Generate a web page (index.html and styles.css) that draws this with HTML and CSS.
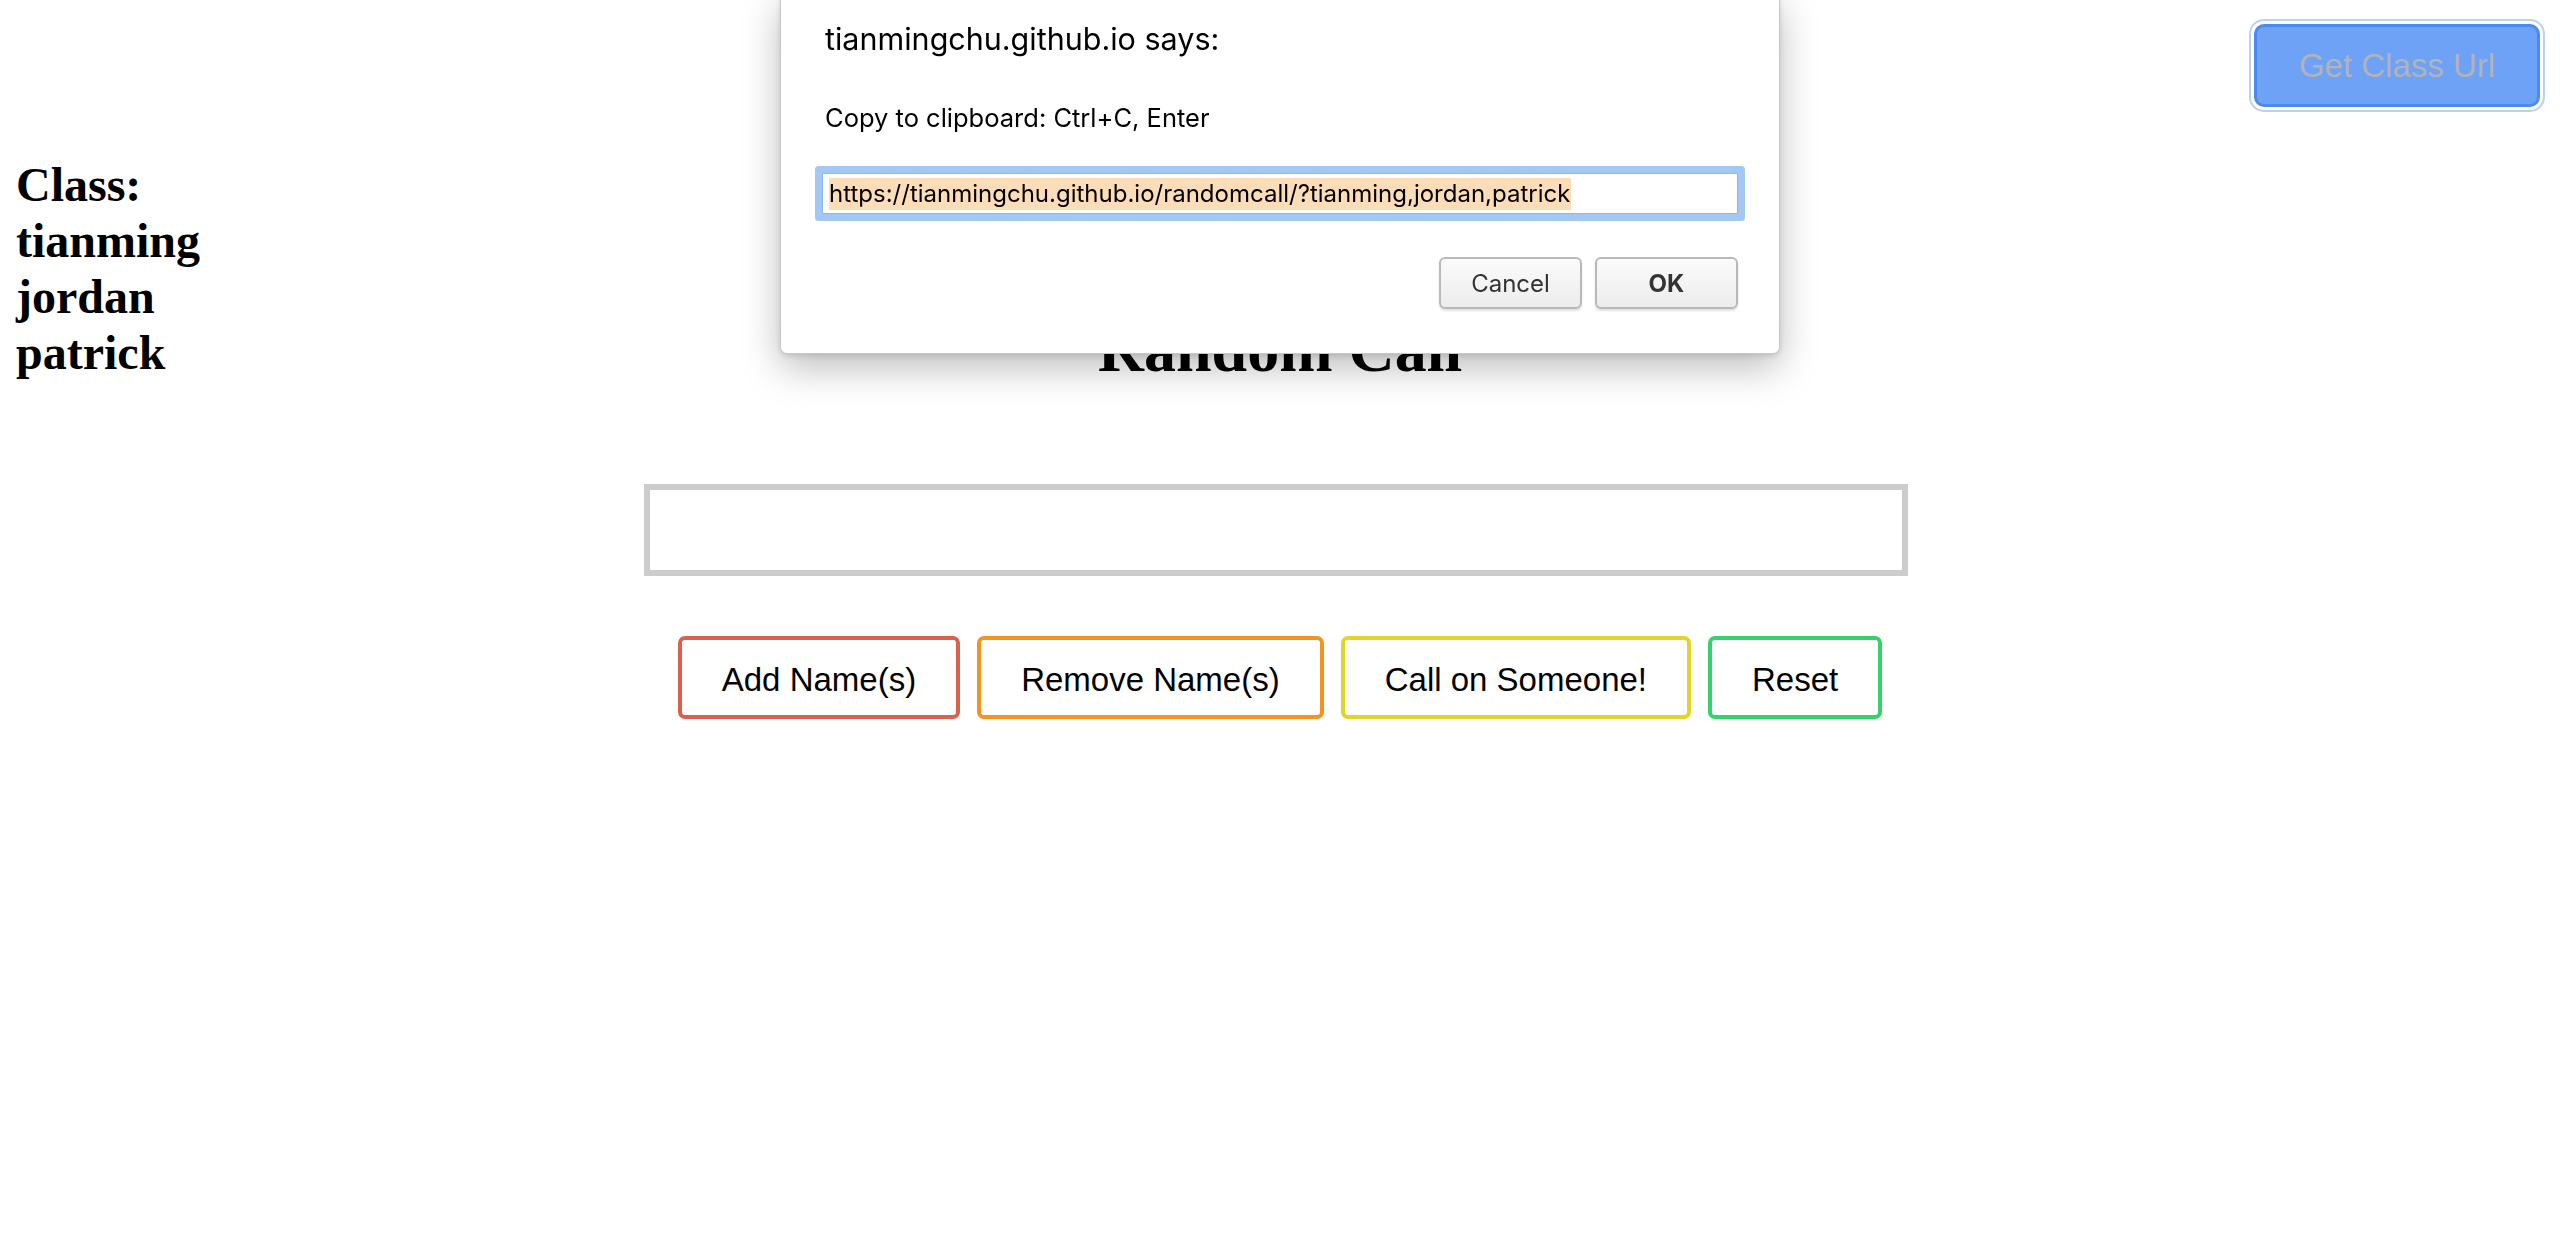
FILE: index.html
```html
<!DOCTYPE html>
<html lang="en">
<head>
<meta charset="utf-8">
<title>Random Call</title>
<link rel="stylesheet" href="styles.css">
</head>
<body>
<div class="page">
  <aside class="class-list">
    <div>Class:</div>
    <div>tianming</div>
    <div>jordan</div>
    <div>patrick</div>
  </aside>
  <main class="main">
    <h1 class="title">Random Call</h1>
    <div class="output-box"></div>
    <div class="actions">
      <button class="act act-red">Add Name(s)</button>
      <button class="act act-orange">Remove Name(s)</button>
      <button class="act act-yellow">Call on Someone!</button>
      <button class="act act-green">Reset</button>
    </div>
  </main>
  <div class="top-right">
    <button class="url-btn">Get Class Url</button>
  </div>
</div>

<div class="dialog">
  <div class="dlg-title">tianmingchu.github.io says:</div>
  <div class="dlg-msg">Copy to clipboard: Ctrl+C, Enter</div>
  <div class="dlg-input"><span class="dlg-sel">https://tianmingchu.github.io/randomcall/?tianming,jordan,patrick</span></div>
  <div class="dlg-buttons">
    <button class="dlg-btn">Cancel</button>
    <button class="dlg-btn dlg-ok">OK</button>
  </div>
</div>
</body>
</html>
```

FILE: styles.css
```css
html, body {
  margin: 0;
  padding: 0;
  background: #ffffff;
}

body {
  font-family: "Liberation Serif", "Times New Roman", serif;
  color: #000;
}

.page {
  display: grid;
  grid-template-columns: 1fr 1272px 1fr;
  min-height: 1250px;
}

/* left class list */
.class-list {
  padding: 157px 0 0 16px;
  font-family: "Liberation Serif", serif;
  font-weight: bold;
  font-size: 48px;
  line-height: 56px;
}

/* centre column */
.main {
  padding-top: 313px;
  display: flex;
  flex-direction: column;
  align-items: center;
}

.title {
  margin: 0;
  font-family: "Liberation Serif", serif;
  font-weight: bold;
  font-size: 64px;
  line-height: 74px;
}

.output-box {
  align-self: flex-start;
  box-sizing: border-box;
  width: 1264px;
  height: 92px;
  margin-top: 97px;
  border: 6px solid #cccccc;
  background: #fff;
}

.actions {
  margin-top: 60px;
  display: flex;
  gap: 17px;
  justify-content: center;
}

.act {
  box-sizing: border-box;
  height: 83px;
  padding: 3px 40px 0 40px;
  border: 4px solid #000;
  border-radius: 7px;
  background: #fff;
  font-family: "Liberation Sans", Arial, sans-serif;
  font-size: 33px;
  color: #000;
  line-height: 1;
}

.act-red { border-color: #dc604a; }
.act-orange { border-color: #f5931c; }
.act-yellow { border-color: #e2d524; }
.act-green { border-color: #30d468; }

/* top right */
.top-right {
  display: flex;
  justify-content: flex-end;
  align-items: flex-start;
  padding: 24px 20px 0 0;
}

.url-btn {
  box-sizing: border-box;
  width: 286px;
  height: 83px;
  border: 3px solid #4b8bf0;
  border-radius: 10px;
  background: #6ea2f6;
  color: #b1b3b8;
  font-family: "Liberation Sans", Arial, sans-serif;
  font-size: 33px;
  outline: 2px solid #bcd1f0;
  outline-offset: 3px;
}

/* alert dialog overlay */
.dialog {
  position: fixed;
  top: -8px;
  left: 780px;
  width: 1000px;
  box-sizing: border-box;
  padding: 28px 41px 44px 41px;
  background: #ffffff;
  border: 1px solid #c8c8c8;
  border-radius: 7px;
  box-shadow: 0 14px 38px rgba(0, 0, 0, 0.26), 0 2px 6px rgba(0, 0, 0, 0.12);
  font-family: Inter, "Liberation Sans", sans-serif;
  color: #000;
}

.dlg-title {
  padding-left: 3px;
  font-size: 30.5px;
  line-height: 36px;
}

.dlg-msg {
  margin-top: 46px;
  padding-left: 3px;
  font-size: 25.5px;
  line-height: 30px;
}

.dlg-input {
  margin-top: 40px;
  box-sizing: border-box;
  height: 41px;
  padding: 0 6px;
  display: flex;
  align-items: center;
  background: #fff;
  border: 1px solid #8fb6ea;
  border-radius: 1px;
  box-shadow: 0 0 0 7px #a4c8f4;
}

.dlg-sel {
  background: #fddcb8;
  font-size: 24px;
  line-height: 32px;
  padding-right: 1px;
}

.dlg-buttons {
  margin-top: 43px;
  display: flex;
  justify-content: flex-end;
  gap: 13px;
}

.dlg-btn {
  box-sizing: border-box;
  width: 143px;
  height: 52px;
  border: 2px solid #b9b9b9;
  border-radius: 6px;
  background: linear-gradient(#fbfbfb, #ececec);
  box-shadow: 0 2px 2px rgba(0, 0, 0, 0.12);
  font-family: Inter, "Liberation Sans", sans-serif;
  font-size: 24px;
  color: #333;
}

.dlg-ok {
  font-weight: bold;
}
```
